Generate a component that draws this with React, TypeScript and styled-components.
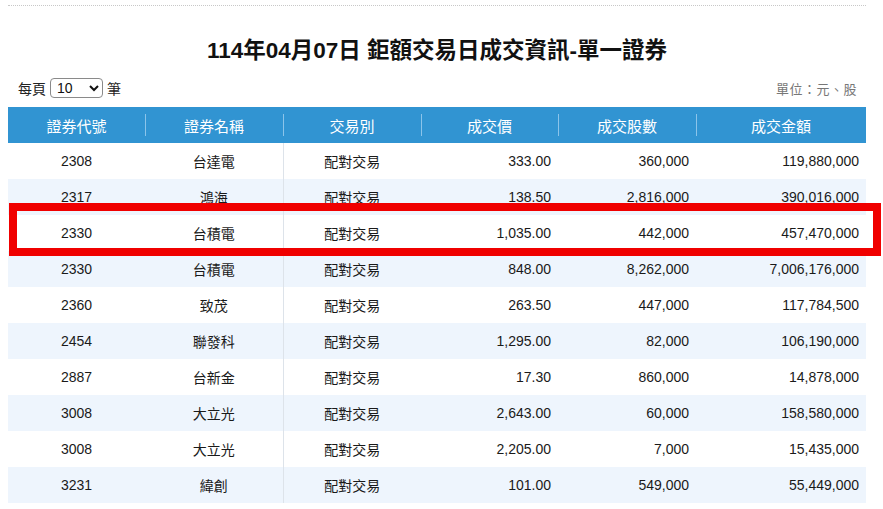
import React from 'react'
import styled, { createGlobalStyle } from 'styled-components'

interface IRow {
  code: string
  name: string
  kind: string
  price: string
  shares: string
  amount: string
}

const rows: IRow[] = [
  { code: '2308', name: '台達電', kind: '配對交易', price: '333.00', shares: '360,000', amount: '119,880,000' },
  { code: '2317', name: '鴻海', kind: '配對交易', price: '138.50', shares: '2,816,000', amount: '390,016,000' },
  { code: '2330', name: '台積電', kind: '配對交易', price: '1,035.00', shares: '442,000', amount: '457,470,000' },
  { code: '2330', name: '台積電', kind: '配對交易', price: '848.00', shares: '8,262,000', amount: '7,006,176,000' },
  { code: '2360', name: '致茂', kind: '配對交易', price: '263.50', shares: '447,000', amount: '117,784,500' },
  { code: '2454', name: '聯發科', kind: '配對交易', price: '1,295.00', shares: '82,000', amount: '106,190,000' },
  { code: '2887', name: '台新金', kind: '配對交易', price: '17.30', shares: '860,000', amount: '14,878,000' },
  { code: '3008', name: '大立光', kind: '配對交易', price: '2,643.00', shares: '60,000', amount: '158,580,000' },
  { code: '3008', name: '大立光', kind: '配對交易', price: '2,205.00', shares: '7,000', amount: '15,435,000' },
  { code: '3231', name: '緯創', kind: '配對交易', price: '101.00', shares: '549,000', amount: '55,449,000' },
]

const headers = ['證券代號', '證券名稱', '交易別', '成交價', '成交股數', '成交金額']
const widths = [137, 138, 138, 137, 138, 170]

const App = () => {
  return (
    <>
      <GlobalStyle />
      <Page>
        <Rule />
        <Title>114年04月07日 鉅額交易日成交資訊-單一證券</Title>

        <Toolbar>
          <PerPage>
            每頁
            <Select defaultValue="10">
              <option value="10">10</option>
              <option value="20">20</option>
              <option value="50">50</option>
            </Select>
            筆
          </PerPage>
          <Unit>單位：元、股</Unit>
        </Toolbar>

        <TableWrap>
          <Table>
            <colgroup>
              {widths.map((w, i) => (
                <col key={i} style={{ width: w }} />
              ))}
            </colgroup>
            <thead>
              <tr>
                {headers.map((h, i) => (
                  <Th key={h} divider={i > 0}>
                    {h}
                  </Th>
                ))}
              </tr>
            </thead>
            <tbody>
              {rows.map((r, i) => (
                <Tr key={i} striped={i % 2 === 1}>
                  <Td>{r.code}</Td>
                  <Td>{r.name}</Td>
                  <Td split>{r.kind}</Td>
                  <Td num>{r.price}</Td>
                  <Td num>{r.shares}</Td>
                  <Td num>{r.amount}</Td>
                </Tr>
              ))}
            </tbody>
          </Table>
          <Highlight />
        </TableWrap>
      </Page>
    </>
  )
}

const GlobalStyle = createGlobalStyle`
  body {
    margin: 0;
    background: #fff;
    font-family: "Liberation Sans", "Noto Sans CJK TC", sans-serif;
    color: #222;
  }
`

const Page = styled.div`
  width: 858px;
  padding: 0 8px;
`

const Rule = styled.div`
  margin-top: 5px;
  border-top: 1px dotted #c8c8c8;
`

const Title = styled.h1`
  margin: 30px 0 0;
  height: 30px;
  line-height: 30px;

  font-size: 22.5px;
  font-weight: bold;
  text-align: center;
  color: #111;
`

const Toolbar = styled.div`
  display: flex;
  justify-content: space-between;
  align-items: center;

  height: 22px;
  margin-top: 11px;
  padding: 0 9px 0 10px;
`

const PerPage = styled.div`
  display: flex;
  align-items: center;
  gap: 4px;

  font-size: 14px;
  color: #222;
`

const Select = styled.select`
  width: 53px;
  height: 20px;
  padding: 0 2px;

  border: 1px solid #8a8a8a;
  border-radius: 4px;

  font-family: "Liberation Sans", sans-serif;
  font-size: 14px;
  color: #111;
  background: #fff;
`

const Unit = styled.span`
  font-size: 13px;
  letter-spacing: 0.5px;
  color: #777;
`

const TableWrap = styled.div`
  position: relative;
  margin-top: 8px;
`

const Table = styled.table`
  width: 858px;
  table-layout: fixed;
  border-collapse: collapse;
  border-spacing: 0;
`

const Th = styled.th<{ divider?: boolean }>`
  position: relative;
  height: 36px;
  padding: 0;

  font-size: 15px;
  font-weight: normal;
  color: #fff;
  background: #3194d2;
  box-shadow: 0 3px 3px -1px rgba(0, 0, 0, 0.18);

  &::before {
    content: '';
    display: ${(p) => (p.divider ? 'block' : 'none')};
    position: absolute;
    left: 0;
    top: 7px;
    bottom: 7px;
    width: 1px;
    background: #8cc4ea;
  }
`

const Tr = styled.tr<{ striped?: boolean }>`
  height: 36px;
  background: ${(p) => (p.striped ? '#eef5fd' : '#fff')};
`

const Td = styled.td<{ num?: boolean; split?: boolean }>`
  padding: 0 ${(p) => (p.num ? '7px' : '0')} 0 0;

  font-size: 14px;
  color: #1a1a1a;
  text-align: ${(p) => (p.num ? 'right' : 'center')};
  border-left: ${(p) => (p.split ? '1px solid #dde3ea' : 'none')};
`

const Highlight = styled.div`
  position: absolute;
  left: 1px;
  top: 96px;
  width: 856px;
  height: 37px;

  border: 8px solid #f00000;
  pointer-events: none;
`

export default App
